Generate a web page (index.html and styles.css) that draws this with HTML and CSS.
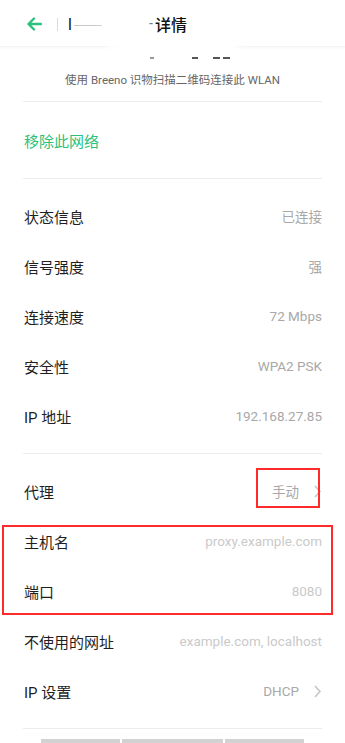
FILE: index.html
```html
<!DOCTYPE html>
<html lang="zh-CN">
<head>
<meta charset="utf-8">
<title>WLAN 详情</title>
<link rel="stylesheet" href="styles.css">
</head>
<body>
<div class="page">
  <header class="topbar">
    <svg class="back" width="16" height="14" viewBox="0 0 16 14"><path d="M15 7H2.5M8 1.5L2.5 7L8 12.5" fill="none" stroke="#2cc17a" stroke-width="2.4" stroke-linecap="round" stroke-linejoin="round"/></svg>
    <span class="vsep"></span>
    <div class="title"><span class="t-l">l</span><span class="t-line"></span><span class="t-gap"></span><span class="t-dash">-</span><span class="t-main">详情</span></div>
  </header>
  <div class="blur-blob"></div>

  <section class="qr">
    <div class="redacted"><span class="d d1"></span><span class="d d2"></span><span class="d d3"></span><span class="d d4"></span></div>
    <p class="caption">使用 Breeno 识物扫描二维码连接此 WLAN</p>
  </section>
  <div class="divider"></div>

  <div class="remove">移除此网络</div>
  <div class="divider"></div>

  <section class="group">
    <div class="row"><span class="label">状态信息</span><span class="value">已连接</span></div>
    <div class="row"><span class="label">信号强度</span><span class="value">强</span></div>
    <div class="row"><span class="label">连接速度</span><span class="value">72 Mbps</span></div>
    <div class="row"><span class="label">安全性</span><span class="value">WPA2 PSK</span></div>
    <div class="row"><span class="label">IP 地址</span><span class="value">192.168.27.85</span></div>
  </section>
  <div class="divider"></div>

  <section class="group">
    <div class="row"><span class="label">代理</span><span class="value">手动<svg class="chev" width="7" height="13" viewBox="0 0 7 13"><path d="M1 1l5 5.5-5 5.5" fill="none" stroke="#c4c4c4" stroke-width="1.5"/></svg></span></div>
    <div class="row"><span class="label">主机名</span><span class="value hint">proxy.example.com</span></div>
    <div class="row"><span class="label">端口</span><span class="value hint">8080</span></div>
    <div class="row"><span class="label">不使用的网址</span><span class="value hint">example.com, localhost</span></div>
    <div class="row"><span class="label">IP 设置</span><span class="value">DHCP<svg class="chev" width="7" height="13" viewBox="0 0 7 13"><path d="M1 1l5 5.5-5 5.5" fill="none" stroke="#c4c4c4" stroke-width="1.5"/></svg></span></div>
  </section>
  <div class="divider"></div>

  <div class="bottom-bars"><span class="bar b1"></span><span class="bar b2"></span><span class="bar b3"></span></div>

  <div class="mark mark-proxy"></div>
  <div class="mark mark-host"></div>
</div>
</body>
</html>
```
FILE: styles.css
```css
* { box-sizing: border-box; }
html, body { margin: 0; padding: 0; background: #fff; }
body {
  font-family: "Roboto", "Noto Sans CJK SC", sans-serif;
  color: #1f1f1f;
}
.page {
  position: relative;
  width: 345px;
  height: 743px;
  overflow: hidden;
  background: #fff;
}
.topbar {
  height: 46px;
  display: flex;
  align-items: center;
  padding-left: 26px;
  box-shadow: 0 1px 3px rgba(0,0,0,0.07);
  position: relative;
}
.back { display: block; margin-top: 2px; }
.vsep {
  width: 1px;
  height: 13px;
  background: #dcdcdc;
  margin-left: 15px;
  margin-top: 2px;
}
.title {
  display: flex;
  align-items: center;
  margin-left: 10px;
  font-size: 16px;
  font-weight: 500;
  color: #111;
  margin-top: 2px;
}
.t-l { font-weight: 400; }
.t-line {
  width: 28px;
  height: 1px;
  background: #bbb;
  margin-left: 2px;
  margin-top: 2px;
  opacity: 0.8;
}
.t-gap { width: 47px; }
.t-dash { color: #777; font-size: 12px; position: relative; z-index: 2; }
.t-main { position: relative; z-index: 2; margin-left: 2px; }
.blur-blob {
  position: absolute;
  left: 105px;
  top: 6px;
  width: 138px;
  height: 50px;
  background: #fff;
  filter: blur(6px);
  border-radius: 20px;
  z-index: 1;
}
.qr { padding-bottom: 11px; }
.redacted {
  height: 24px;
  position: relative;
  z-index: 2;
}
.d {
  position: absolute;
  top: 11px;
  height: 2px;
  background: #555;
  filter: blur(0.5px);
}
.d1 { left: 150px; width: 4px; background: #999; }
.d2 { left: 192px; width: 6px; }
.d3 { left: 213px; width: 7px; }
.d4 { left: 223px; width: 7px; }
.caption {
  margin: 0;
  height: 20px;
  line-height: 20px;
  text-align: center;
  font-size: 11.5px;
  color: #666;
}
.divider {
  height: 1px;
  background: #ececec;
  margin: 0 23px;
}
.remove {
  height: 76px;
  display: flex;
  align-items: center;
  padding-left: 24px;
  padding-top: 1px;
  font-size: 15px;
  color: #2cc17a;
}
.group { padding: 12px 0 12px; }
.row {
  height: 50px;
  display: flex;
  align-items: center;
  justify-content: space-between;
  padding: 0 23px 0 24px;
}
.label { font-size: 15px; color: #1f1f1f; }
.value {
  display: flex;
  align-items: center;
  font-size: 13.5px;
  color: #a8a8a8;
}
.value.hint { color: #cacaca; }
.chev { margin-left: 15px; margin-right: 1px; }
.bottom-bars {
  display: flex;
  gap: 2px;
  padding: 10px 0 0 41px;
}
.bar { height: 4px; background: #d2d2d2; }
.b1 { width: 79px; }
.b2 { width: 101px; }
.b3 { width: 79px; }
.mark {
  position: absolute;
  border: 2px solid #ff2a2a;
}
.mark-proxy { left: 256px; top: 468px; width: 64px; height: 40px; }
.mark-host { left: 2px; top: 525px; width: 331px; height: 90px; }
```
